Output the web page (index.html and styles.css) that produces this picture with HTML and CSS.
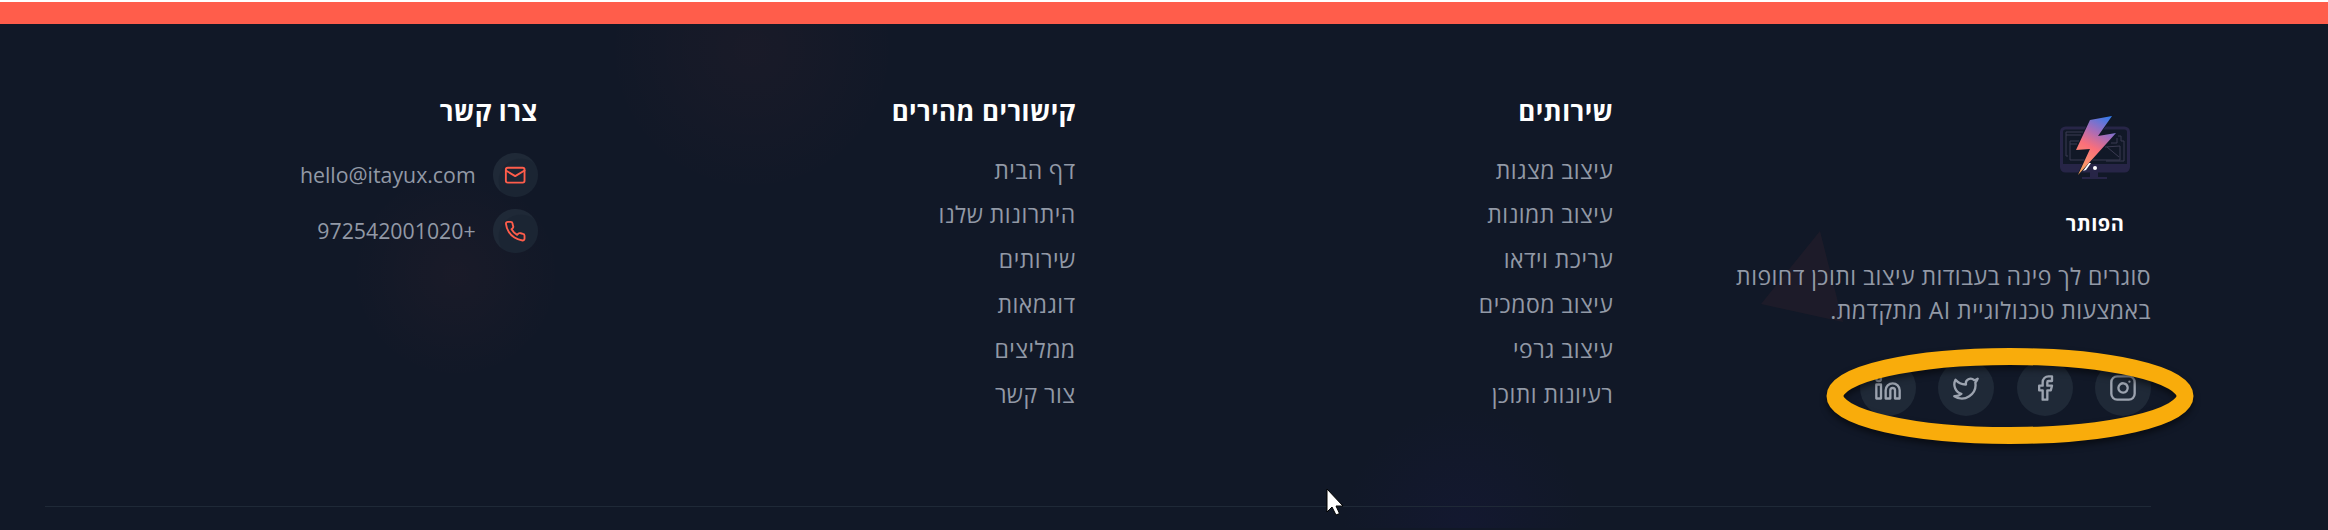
FILE: index.html
```html
<!DOCTYPE html>
<html lang="he" dir="rtl">
<head>
<meta charset="utf-8">
<title>הפותר</title>
<link rel="stylesheet" href="styles.css">
</head>
<body>
<div class="strip"></div>
<footer class="footer">
  <svg class="decor" viewBox="0 0 2328 506" aria-hidden="true">
    <defs>
      <radialGradient id="warm"><stop offset="0" stop-color="#ff5d4b" stop-opacity=".036"/><stop offset=".4" stop-color="#ff5d4b" stop-opacity=".022"/><stop offset="1" stop-color="#ff5d4b" stop-opacity="0"/></radialGradient>
      <radialGradient id="cool"><stop offset="0" stop-color="#2a1a8a" stop-opacity=".09"/><stop offset="1" stop-color="#2a1a8a" stop-opacity="0"/></radialGradient>
    </defs>
    <circle cx="752" cy="26" r="145" fill="url(#warm)"/>
    <circle cx="456" cy="252" r="105" fill="url(#warm)"/>
    <circle cx="1464" cy="506" r="122" fill="url(#cool)"/>
    <path d="M1820 209L1843 300L1761 282Z" fill="#ff5d4b" fill-opacity=".05"/>
  </svg>
  <div class="columns">
    <section class="brand">
      <div class="logo">
        <svg class="logo-mark" viewBox="0 0 80 72" aria-hidden="true">
          <defs><linearGradient id="bolt" x1="55" y1="5" x2="25" y2="60" gradientUnits="userSpaceOnUse"><stop offset="0" stop-color="#2f7cf0"/><stop offset=".33" stop-color="#a86cb8"/><stop offset=".58" stop-color="#fb6f7a"/><stop offset=".8" stop-color="#fb8a70"/><stop offset="1" stop-color="#f7a45c"/></linearGradient></defs>
          <rect x="6.5" y="17" width="67" height="43" rx="4" fill="none" stroke="#272547" stroke-width="3"/>
          <path d="M6 53H74V57a4 4 0 0 1-4 4H10a4 4 0 0 1-4-4ZM35 60H43V66H35ZM27 66H52V68H27Z" fill="#272547"/>
          <g fill="none" stroke="#3b3b52" stroke-width="1"><path d="M13 45H11V21H28M11 24H26M17 49H15V30H24M15 33H22M17 49H65V35L50 36M52 36L64 46M63 25H66V30H69V50H51M56 32H62V27"/></g>
          <path d="M35 9L57 5L43 25L61 22L23 64L35 38L21 39Z" fill="url(#bolt)" stroke="#111827" stroke-width="1.5" paint-order="stroke"/>
          <path d="M34 52L36 52L31 59L28 60Z" fill="#fff"/><circle cx="40" cy="57" r="2" fill="#fff"/>
        </svg>
        <div class="logo-name">הפותר</div>
      </div>
      <p class="about">סוגרים לך פינה בעבודות עיצוב ותוכן דחופות באמצעות טכנולוגיית AI מתקדמת.</p>
      <div class="social">
        <a class="social-link"><svg class="icon" viewBox="0 0 24 24"><rect x="2" y="2" width="20" height="20" rx="5"/><path d="M16 11.37A4 4 0 1 1 12.63 8 4 4 0 0 1 16 11.37zM17.5 6.5h.01"/></svg></a>
        <a class="social-link"><svg class="icon" viewBox="0 0 24 24"><path d="M18 2h-3a5 5 0 0 0-5 5v3H7v4h3v8h4v-8h3l1-4h-4V7a1 1 0 0 1 1-1h3z"/></svg></a>
        <a class="social-link"><svg class="icon" viewBox="0 0 24 24"><path d="M22 4s-.7 2.1-2 3.4c1.6 10-9.4 17.3-18 11.6 2.2.1 4.4-.6 6-2C3 15.5.5 9.6 3 5c2.2 2.6 5.6 4.1 9 4-.9-4.2 4-6.6 7-3.8 1.1 0 3-1.2 3-1.2z"/></svg></a>
        <a class="social-link"><svg class="icon" viewBox="0 0 24 24"><path d="M16 8a6 6 0 0 1 6 6v7h-4v-7a2 2 0 0 0-4 0v7h-4v-7a6 6 0 0 1 6-6z"/><path d="M2 9h4v12H2z"/><circle cx="4" cy="4" r="2"/></svg></a>
        <svg class="highlight" viewBox="0 0 368 98"><ellipse cx="184" cy="49" rx="175" ry="39.5"/></svg>
      </div>
    </section>
    <section>
      <h3 class="title">שירותים</h3>
      <ul class="links"><li>עיצוב מצגות</li><li>עיצוב תמונות</li><li>עריכת וידאו</li><li>עיצוב מסמכים</li><li>עיצוב גרפי</li><li>רעיונות ותוכן</li></ul>
    </section>
    <section>
      <h3 class="title">קישורים מהירים</h3>
      <ul class="links"><li>דף הבית</li><li>היתרונות שלנו</li><li>שירותים</li><li>דוגמאות</li><li>ממליצים</li><li>צור קשר</li></ul>
    </section>
    <section>
      <h3 class="title">צרו קשר</h3>
      <ul class="links contacts">
        <li class="contact"><span class="badge"><svg class="icon" viewBox="0 0 24 24"><rect x="2" y="4" width="20" height="16" rx="2"/><path d="m22 7-10 6L2 7"/></svg></span><span>hello@itayux.com</span></li>
        <li class="contact"><span class="badge"><svg class="icon" viewBox="0 0 24 24"><path d="M22 16.92v3a2 2 0 0 1-2.18 2 19.79 19.79 0 0 1-8.63-3.07 19.5 19.5 0 0 1-6-6 19.79 19.79 0 0 1-3.07-8.67A2 2 0 0 1 4.11 2h3a2 2 0 0 1 2 1.72 12.84 12.84 0 0 0 .7 2.81 2 2 0 0 1-.45 2.11L8.09 9.91a16 16 0 0 0 6 6l1.27-1.27a2 2 0 0 1 2.11-.45 12.84 12.84 0 0 0 2.81.7A2 2 0 0 1 22 16.92z"/></svg></span><span>+972542001020</span></li>
      </ul>
    </section>
  </div>
  <div class="divider"></div>
</footer>
<svg class="cursor" viewBox="0 0 18 28" aria-hidden="true"><path d="M1 1V24L6 19L10 27L13.500 25.500L10 18H17Z" fill="#fff" stroke="#000" stroke-width="1"/></svg>
</body>
</html>
```

FILE: styles.css
```css
* { box-sizing: border-box; margin: 0; padding: 0; }
body {
  height: 530px;
  overflow: hidden;
  background: #fff;
  color: #9299a6;
  font: 23px/33.6px "Open Sans", "Noto Sans", sans-serif;
  letter-spacing: .45px;
}
.strip { height: 22px; margin-top: 2px; background: #ff5d4b; }
.footer {
  height: 506px;
  position: relative;
  padding: 68px 177px 0 45px;
  background: #111827;
  overflow: hidden;
}
.decor { position: absolute; left: 0; top: 0; width: 2328px; height: 506px; margin-top: -2px; }
.columns {
  position: relative;
  display: grid;
  grid-template-columns: repeat(4, 1fr);
  gap: 44.8px;
}
.brand { display: flex; flex-direction: column; }
.logo {
  display: flex;
  flex-direction: column;
  align-items: center;
  width: 112px;
  height: 168px;
  padding-top: 19px;
}
.logo-mark { width: 80px; height: 72px; }
.logo-name { margin-top: 26px; color: #fff; font-size: 20px; font-weight: 700; line-height: 30px; }
.about { width: 450px; }
.social { position: relative; display: flex; gap: 22.4px; margin-top: 33px; }
.social-link {
  display: grid;
  place-items: center;
  width: 56px;
  height: 56px;
  border-radius: 50%;
  background: #1f2937;
  color: #9ca3af;
}
.icon {
  width: 28px;
  height: 28px;
  fill: none;
  stroke: currentColor;
  stroke-width: 2;
  stroke-linecap: round;
  stroke-linejoin: round;
}
.highlight {
  position: absolute;
  right: -43px;
  top: -13px;
  width: 368px;
  height: 98px;
  overflow: visible;
  fill: none;
  stroke: #f9ac0b;
  stroke-width: 17;
  filter: drop-shadow(0 4px 3px rgba(0, 0, 0, .5));
}
.title {
  margin-bottom: 22.4px;
  color: #fff;
  font-size: 25.9px;
  font-weight: 700;
  line-height: 39.2px;
}
.links { display: grid; gap: 11.2px; list-style: none; }
.contacts { margin-top: -1px; }
.contact {
  display: flex;
  align-items: center;
  gap: 17.500px;
  height: 44.8px;
  font-size: 21.3px;
  letter-spacing: 0;
}
.badge {
  display: grid;
  place-items: center;
  width: 44.8px;
  height: 44.8px;
  border-radius: 50%;
  background: radial-gradient(circle at 28px 28px, #1b2533 22px, #1f2937 23px);
  color: #ff5d4b;
}
.badge .icon { width: 22.4px; height: 22.4px; }
.divider { position: relative; height: 1px; margin-top: 90px; background: #1f2937; }
.cursor { position: absolute; left: 1326px; top: 488px; width: 18px; height: 28px; }
```
